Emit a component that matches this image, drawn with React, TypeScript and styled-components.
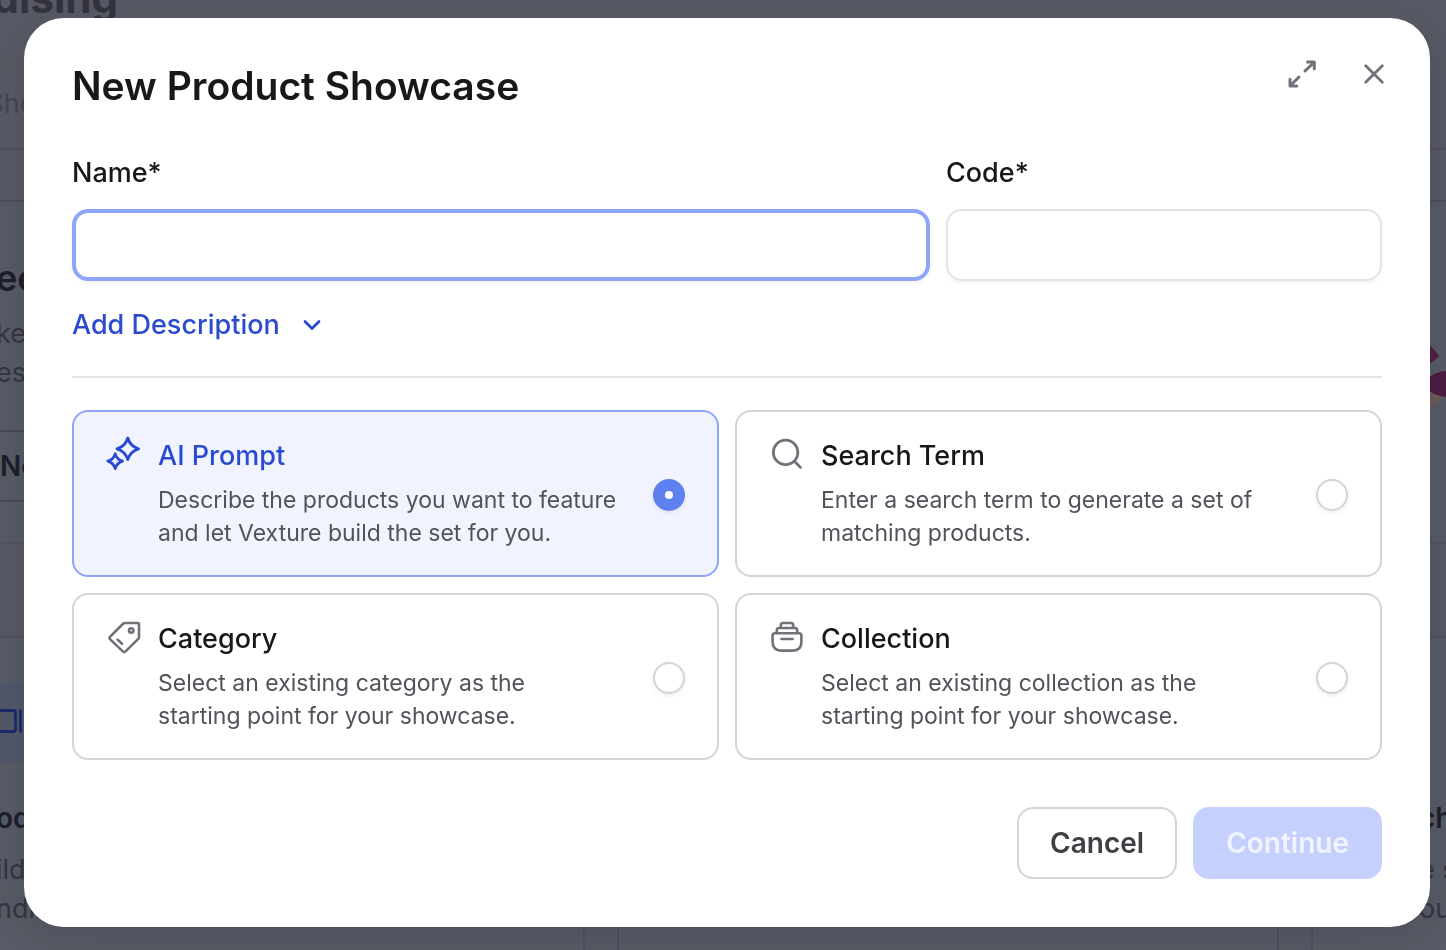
import React, { useState } from "react";
import styled, { createGlobalStyle, css } from "styled-components";

const GlobalStyle = createGlobalStyle`
  *, *::before, *::after { box-sizing: border-box; }
  html, body { margin: 0; height: 100%; overflow: hidden; }
  body {
    background: #575964;
    color: #18181b;
    font-family: Inter, "Liberation Sans", sans-serif;
  }
  button, input { font: inherit; }
`;

/* ---------- dimmed page behind the dialog ---------- */

const Backdrop = styled.div`
  display: flex;
  flex-direction: column;
  height: 100vh;
  overflow: hidden;
  color: #2b2d3a;
  white-space: nowrap;
`;

const PageHeader = styled.header`
  height: 150px;
  flex: none;
  border-bottom: 2px solid #51525e;
`;

const PageTitle = styled.div`
  width: 118px;
  height: 24px;
  display: flex;
  justify-content: flex-end;
  align-items: flex-end;
  font-size: 42px;
  line-height: 52px;
  font-weight: 700;
  color: #32333f;
`;

const Crumb = styled.div`
  width: 36px;
  margin-top: 60px;
  display: flex;
  justify-content: flex-end;
  font-size: 27px;
  line-height: 40px;
  color: #454652;
`;

const Toolbar = styled.div`
  height: 52px;
  flex: none;
  border-bottom: 2px solid #4e4f5b;
`;

const Hero = styled.section`
  display: flex;
  justify-content: space-between;
  height: 342px;
  flex: none;
  background: #565b65;
  border-bottom: 2px solid #50525e;
`;

const HeroText = styled.div`
  width: 40px;
  padding-top: 56px;
`;

const Strong = styled.div<{ $size?: number }>`
  margin-left: -4px;
  font-size: ${(p) => p.$size ?? 28}px;
  line-height: 40px;
  font-weight: 600;
  color: #1c1e2b;
`;

const Faded = styled.div`
  margin-left: -4px;
  font-size: 27px;
  line-height: 39px;
  color: #333541;
`;

const HeroCopy = styled.div`
  padding-top: 16px;
`;

const HeroAction = styled.div`
  margin-top: 38px;
  height: 72px;
  padding: 14px 0 0 4px;
  border-top: 2px solid #484a56;
  border-bottom: 2px solid #484a56;
`;

const HeroArt = styled.svg`
  margin-top: 128px;
  width: 40px;
  height: 100px;
`;

const Cards = styled.section`
  display: flex;
  gap: 32px;
  flex: 1;
  margin-top: 92px;
`;

const Card = styled.div<{ $basis?: number }>`
  ${(p) =>
    p.$basis
      ? css`
          flex: none;
          width: ${p.$basis}px;
        `
      : css`
          flex: 1;
        `}
  background: #565b65;
  border: 2px solid #50515d;
  border-bottom: 0;
  border-left-width: ${(p) => (p.$basis === 585 ? 0 : 2)}px;
  border-right-width: ${(p) => (p.$basis === 135 ? 0 : 2)}px;
  padding-top: 44px;
`;

const CardBand = styled.div<{ $tinted?: boolean }>`
  height: 80px;
  padding-top: 24px;
  margin-bottom: 36px;
  background: ${(p) => (p.$tinted ? "#515869" : "transparent")};
`;

const CardCopy = styled.div`
  padding-top: 12px;
`;

const CardEnd = styled.div`
  padding-left: 110px;
`;

/* ---------- dialog ---------- */

const Layer = styled.div`
  position: fixed;
  inset: 0;
  padding: 18px 16px 16px 24px;
  overflow: auto;
`;

const Dialog = styled.form`
  padding: 48px;
  background: #fff;
  border-radius: 40px;
  box-shadow: 0 8px 32px rgba(30, 30, 50, 0.16);
`;

const DialogHeader = styled.header`
  display: flex;
  justify-content: space-between;
  align-items: flex-start;
  height: 40px;
  margin-bottom: 47px;
`;

const Title = styled.h1`
  margin: 0;
  font-size: 39px;
  line-height: 40px;
  font-weight: 600;
`;

const HeaderActions = styled.div`
  display: flex;
  gap: 32px;
  margin: -12px -12px 0 0;
`;

const IconButton = styled.button`
  display: grid;
  place-items: center;
  width: 40px;
  height: 40px;
  padding: 0;
  border: 0;
  border-radius: 8px;
  background: none;
  color: #71717a;
  cursor: pointer;
`;

const Fields = styled.div`
  display: grid;
  grid-template-columns: minmax(0, 1fr) 436px;
  gap: 16px;
`;

const Field = styled.label`
  display: flex;
  flex-direction: column;
  gap: 16px;
  font-size: 27px;
  line-height: 40px;
  font-weight: 500;
`;

const TextInput = styled.input<{ $active?: boolean }>`
  width: 100%;
  height: 72px;
  padding: 0 24px;
  border-radius: 16px;
  background: #fff;
  outline: none;
  border: ${(p) => (p.$active ? "4px solid #8fa5fb" : "2px solid #e4e4e7")};
  box-shadow: 0 2px 4px rgba(24, 24, 60, 0.05);
`;

const DescriptionToggle = styled.button`
  display: flex;
  align-items: center;
  gap: 18px;
  margin: 24px 0 31px;
  padding: 0;
  border: 0;
  background: none;
  color: #2a4bd0;
  font-size: 27px;
  line-height: 40px;
  font-weight: 500;
  cursor: pointer;
`;

const Divider = styled.hr`
  height: 2px;
  margin: 0 0 32px;
  border: 0;
  background: #e4e4e7;
`;

const Options = styled.fieldset`
  display: grid;
  grid-template-columns: repeat(2, minmax(0, 1fr));
  grid-auto-rows: minmax(167px, auto);
  gap: 16px;
  margin: 0 0 47px;
  padding: 0;
  border: 0;
`;

const Option = styled.label<{ $selected: boolean }>`
  display: flex;
  gap: 16px;
  padding: 24px 32px 22px;
  border: 2px solid ${(p) => (p.$selected ? "#8fa5fb" : "#d4d4d8")};
  border-radius: 16px;
  background: ${(p) => (p.$selected ? "#f1f4fe" : "#fff")};
  color: ${(p) => (p.$selected ? "#2a4bd0" : "#71717a")};
  cursor: pointer;
`;

const OptionText = styled.span`
  flex: 1;
  min-width: 0;
`;

const OptionTitle = styled.span<{ $selected: boolean }>`
  display: block;
  margin-bottom: 8px;
  font-size: 27px;
  line-height: 40px;
  font-weight: 500;
  color: ${(p) => (p.$selected ? "#2a4bd0" : "#18181b")};
`;

const OptionDescription = styled.span`
  display: block;
  font-size: 23px;
  line-height: 33px;
  color: #52525b;
  white-space: nowrap;
`;

const Radio = styled.input`
  appearance: none;
  flex: none;
  align-self: center;
  width: 32px;
  height: 32px;
  margin: 0;
  border: 2px solid #d4d4d8;
  border-radius: 50%;
  background: #fff;
  box-shadow: 0 2px 4px rgba(24, 24, 60, 0.07);
  cursor: pointer;

  &:checked {
    border: 12px solid #5f80ef;
  }
`;

const Footer = styled.footer`
  display: flex;
  justify-content: flex-end;
  gap: 16px;
`;

const Button = styled.button<{ $primary?: boolean }>`
  height: 72px;
  padding: 0 31px;
  border: 2px solid ${(p) => (p.$primary ? "#c5d0fc" : "#d4d4d8")};
  border-radius: 16px;
  background: ${(p) => (p.$primary ? "#c5d0fc" : "#fff")};
  color: ${(p) => (p.$primary ? "#f1f4fe" : "#3f3f46")};
  font-size: 28px;
  line-height: 40px;
  font-weight: 600;
`;

/* ---------- icons ---------- */

const Glyph = styled.svg.attrs({
  fill: "none",
  stroke: "currentColor",
  strokeLinecap: "round",
  strokeLinejoin: "round",
  "aria-hidden": true,
})`
  flex: none;
  display: block;
`;

const ExpandIcon = () => (
  <Glyph width="32" height="32" viewBox="0 0 32 32" strokeWidth="3">
    <path d="M21.5 4H28.3V10.8M27.2 5.2L19 13M4 21.2V28H10.8M5.2 26.8L13 19" />
  </Glyph>
);

const CloseIcon = () => (
  <Glyph width="32" height="32" viewBox="0 0 32 32" strokeWidth="2.8">
    <path d="M7.7 7.7L24.3 24.3M24.3 7.7L7.7 24.3" />
  </Glyph>
);

const ChevronIcon = () => (
  <Glyph width="28" height="28" viewBox="0 0 28 28" strokeWidth="2.8">
    <path d="M7 10.5L14 17.5L21 10.5" />
  </Glyph>
);

const SparklesIcon = () => (
  <Glyph width="36" height="36" viewBox="0 0 36 36" strokeWidth="2.8">
    <path d="M21.8 2Q24.2 10.2 32.6 12.8Q24.2 15.4 21.8 23.6Q19.4 15.4 11 12.8Q19.4 10.2 21.8 2Z" />
    <path d="M9.2 17.8Q10.8 23.4 16.6 25.2Q10.8 27 9.2 32.6Q7.6 27 1.8 25.2Q7.6 23.4 9.2 17.8Z" />
  </Glyph>
);

const SearchIcon = () => (
  <Glyph width="36" height="36" viewBox="0 0 36 36" strokeWidth="2.8">
    <circle cx="16.6" cy="16.4" r="12.2" />
    <path d="M25.4 25.2L31.4 31.4" />
  </Glyph>
);

const TagIcon = () => (
  <Glyph width="36" height="36" viewBox="0 0 36 36" strokeWidth="2.6">
    <path d="M19.2 4H32Q33 4 33 5V17.8Q33 19.2 32 20.2L19.6 32.4Q18.2 33.8 16.8 32.4L4.2 20.4Q2.8 19 4.2 17.6L16.8 5Q17.8 4 19.2 4Z" />
    <circle cx="25.2" cy="11.4" r="2.2" />
    <path d="M11.6 20.6L16 24.8" />
  </Glyph>
);

const CollectionIcon = () => (
  <Glyph width="36" height="36" viewBox="0 0 36 36" strokeWidth="2.6">
    <path d="M6 14.2H30Q32.4 14.2 32.4 16.6V23Q32.4 31.6 24 31.6H12Q3.6 31.6 3.6 23V16.6Q3.6 14.2 6 14.2Z" />
    <path d="M7.8 14V11.2Q7.8 9 10 9H26Q28.2 9 28.2 11.2V14" />
    <path d="M11.8 8.8V6.2Q11.8 4 14 4H22Q24.2 4 24.2 6.2V8.8" />
    <path d="M12.4 20H23.6" />
  </Glyph>
);

const options = [
  {
    id: "prompt",
    title: "AI Prompt",
    lines: ["Describe the products you want to feature", "and let Vexture build the set for you."],
    Icon: SparklesIcon,
  },
  {
    id: "search",
    title: "Search Term",
    lines: ["Enter a search term to generate a set of", "matching products."],
    Icon: SearchIcon,
  },
  {
    id: "category",
    title: "Category",
    lines: ["Select an existing category as the", "starting point for your showcase."],
    Icon: TagIcon,
  },
  {
    id: "collection",
    title: "Collection",
    lines: ["Select an existing collection as the", "starting point for your showcase."],
    Icon: CollectionIcon,
  },
];

const PageBehind = () => (
  <Backdrop aria-hidden="true">
    <PageHeader>
      <PageTitle>dising</PageTitle>
      <Crumb>Sho</Crumb>
    </PageHeader>
    <Toolbar />
    <Hero>
      <HeroText>
        <Strong $size={36}>ee</Strong>
        <HeroCopy>
          <Faded>ke</Faded>
          <Faded>es</Faded>
        </HeroCopy>
        <HeroAction>
          <Strong>Ne</Strong>
        </HeroAction>
      </HeroText>
      <HeroArt viewBox="0 0 40 100">
        <path d="M10 2L24 15L32.5 25Q33.5 26 32.5 27L20 37Z" fill="#4f2142" />
        <path d="M20 60H40V66L36 68L22 80Z" fill="#6c5a57" />
        <ellipse cx="43" cy="54" rx="23" ry="13" fill="#4d1c40" />
      </HeroArt>
    </Hero>
    <Cards>
      <Card $basis={585}>
        <CardBand $tinted>
          <Glyph width="24" height="32" viewBox="0 0 24 32" strokeWidth="2.8" color="#1b2a6b">
            <path d="M-6 4.5H13Q15.5 4.5 15.5 7V23Q15.5 25.5 13 25.5H-6M20.5 4.5V25.5" />
          </Glyph>
        </CardBand>
        <Strong>od</Strong>
        <CardCopy>
          <Faded>ild</Faded>
          <Faded>ndin</Faded>
        </CardCopy>
      </Card>
      <Card />
      <Card $basis={135}>
        <CardBand />
        <CardEnd>
          <Strong>ch</Strong>
          <CardCopy>
            <Faded>e s</Faded>
            <Faded>ou</Faded>
          </CardCopy>
        </CardEnd>
      </Card>
    </Cards>
  </Backdrop>
);

export default function App() {
  const [selected, setSelected] = useState("prompt");

  return (
    <>
      <GlobalStyle />
      <PageBehind />
      <Layer>
        <Dialog role="dialog" aria-labelledby="dialog-title" onSubmit={(e) => e.preventDefault()}>
          <DialogHeader>
            <Title id="dialog-title">New Product Showcase</Title>
            <HeaderActions>
              <IconButton type="button" aria-label="Expand">
                <ExpandIcon />
              </IconButton>
              <IconButton type="button" aria-label="Close">
                <CloseIcon />
              </IconButton>
            </HeaderActions>
          </DialogHeader>

          <Fields>
            <Field>
              Name*
              <TextInput type="text" name="name" $active />
            </Field>
            <Field>
              Code*
              <TextInput type="text" name="code" />
            </Field>
          </Fields>

          <DescriptionToggle type="button" aria-expanded="false">
            Add Description
            <ChevronIcon />
          </DescriptionToggle>

          <Divider />

          <Options aria-label="Starting point">
            {options.map(({ id, title, lines, Icon }) => {
              const active = selected === id;
              return (
                <Option key={id} $selected={active}>
                  <Icon />
                  <OptionText>
                    <OptionTitle $selected={active}>{title}</OptionTitle>
                    {lines.map((line) => (
                      <OptionDescription key={line}>{line}</OptionDescription>
                    ))}
                  </OptionText>
                  <Radio
                    type="radio"
                    name="source"
                    value={id}
                    checked={active}
                    onChange={() => setSelected(id)}
                  />
                </Option>
              );
            })}
          </Options>

          <Footer>
            <Button type="button">Cancel</Button>
            <Button type="submit" disabled $primary>
              Continue
            </Button>
          </Footer>
        </Dialog>
      </Layer>
    </>
  );
}
